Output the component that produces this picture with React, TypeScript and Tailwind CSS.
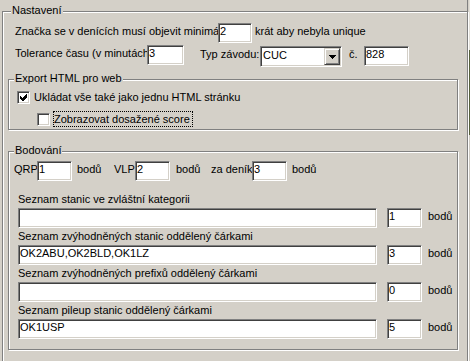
import React from 'react';

// classic etched group box, legend sits over the top line
function GroupBox({
  label,
  labelClass,
  className,
  children,
}: {
  label: string;
  labelClass: string;
  className: string;
  children: React.ReactNode;
}) {
  return (
    <div className={`relative border border-[#808080] shadow-[inset_1px_1px_0_#ffffff,1px_1px_0_#ffffff] ${className}`}>
      <span className={`absolute top-[-8px] bg-[#d4d0c8] px-px leading-[13px] whitespace-nowrap ${labelClass}`}>{label}</span>
      {children}
    </div>
  );
}

function Field({ value = '', className = '' }: { value?: string; className?: string }) {
  return (
    <div
      className={`h-[20px] shrink-0 overflow-hidden whitespace-nowrap bg-white border border-t-[#808080] border-l-[#808080] border-r-white border-b-white shadow-[inset_1px_1px_0_#404040,inset_-1px_-1px_0_#d4d0c8] pl-[1px] leading-[14px] ${className}`}
    >
      {value}
    </div>
  );
}

function Checkbox({ checked }: { checked?: boolean }) {
  return (
    <div className="w-[13px] h-[13px] shrink-0 bg-white border border-t-[#808080] border-l-[#808080] border-r-white border-b-white shadow-[inset_1px_1px_0_#404040,inset_-1px_-1px_0_#d4d0c8] flex items-center justify-center">
      {checked && (
        <svg width="9" height="9" viewBox="-1 -1 9 9" shapeRendering="crispEdges">
          <polygon points="0,2 2,4 6,0 7,0 7,3 3,7 2,7 0,5" fill="#000" />
        </svg>
      )}
    </div>
  );
}

function Select({ value }: { value: string }) {
  return (
    <div className="mt-[1px] w-[82px] h-[21px] shrink-0 flex bg-white border border-t-[#808080] border-l-[#808080] border-r-white border-b-white shadow-[inset_1px_1px_0_#404040,inset_-1px_-1px_0_#d4d0c8] p-px">
      <div className="flex-1 leading-[14px] pl-px">{value}</div>
      <div className="w-[16px] h-[17px] bg-[#d4d0c8] border border-t-[#d4d0c8] border-l-[#d4d0c8] border-r-[#404040] border-b-[#404040] shadow-[inset_1px_1px_0_#ffffff,inset_-1px_-1px_0_#808080] flex items-center justify-center">
        <svg width="7" height="4" viewBox="0 0 7 4" shapeRendering="crispEdges">
          <polygon points="0,0 7,0 3.5,4" fill="#000" />
        </svg>
      </div>
    </div>
  );
}

function ListRow({ label, value, points }: { label: string; value: string; points: string }) {
  return (
    <div>
      <div className="h-[17px] pt-px leading-[14px] whitespace-nowrap">{label}</div>
      <div className="flex items-start h-[20px]">
        <Field value={value} className="w-[359px]" />
        <Field value={points} className="w-[35px] ml-[10px]" />
        <span className="ml-[6px] mt-px leading-[14px]">bodů</span>
      </div>
    </div>
  );
}

export default function App() {
  return (
    <div className="w-[470px] h-[361px] overflow-hidden bg-[#d4d0c8] flex text-[11px] text-black font-['Liberation_Sans',Arial,sans-serif]">
      <div className="w-[469px] shrink-0">
        <div className="h-[11px] flex justify-end">
          <div className="w-px bg-[#808080] mr-px" />
        </div>

        {/* Nastavení */}
        <GroupBox label="Nastavení" labelClass="left-[8px]" className="ml-[2px] w-[466px] h-[352px]">
          <div className="flex items-start mt-[11px] pl-[12px] h-[20px]">
            <span className="w-[203px] shrink-0 overflow-hidden whitespace-nowrap mt-px leading-[14px]">
              Značka se v denících musí objevit minimá
            </span>
            <Field value="2" className="w-[34px]" />
            <span className="ml-[3px] mt-px leading-[14px] whitespace-nowrap">krát aby nebyla unique</span>
          </div>

          <div className="flex items-start mt-[2px] pl-[12px] h-[22px]">
            <span className="w-[132px] shrink-0 overflow-hidden whitespace-nowrap mt-px leading-[14px]">
              Tolerance času (v minutách
            </span>
            <Field value="3" className="w-[37px]" />
            <span className="ml-[16px] w-[60px] shrink-0 mt-[2px] leading-[14px] whitespace-nowrap">Typ závodu:</span>
            <Select value="CUC" />
            <span className="ml-[7px] w-[15px] shrink-0 mt-[2px] leading-[14px]">č.</span>
            <Field value="828" className="w-[45px] mt-px" />
          </div>

          {/* Export HTML pro web */}
          <GroupBox label="Export HTML pro web" labelClass="left-[5px]" className="mt-[12px] ml-[5px] w-[450px] h-[51px]">
            <div className="flex items-center pt-[11px] pl-[8px]">
              <Checkbox checked />
              <span className="ml-[4px] leading-[13px] whitespace-nowrap">Ukládat vše také jako jednu HTML stránku</span>
            </div>
            <div className="flex items-center mt-[7px] pl-[28px]">
              <Checkbox />
              <span className="ml-[3px] border border-dotted border-black pr-[2px] leading-[14px] whitespace-nowrap">
                Zobrazovat dosažené score
              </span>
            </div>
          </GroupBox>

          {/* Bodování */}
          <GroupBox label="Bodování" labelClass="left-[5px]" className="mt-[21px] ml-[5px] w-[450px] h-[199px]">
            <div className="flex items-start pt-[9px] pl-[5px] h-[29px]">
              <span className="w-[23px] shrink-0 overflow-hidden mt-px leading-[14px]">QRP</span>
              <Field value="1" className="w-[35px]" />
              <span className="w-[42px] shrink-0 pl-[5px] mt-px leading-[14px]">bodů</span>
              <span className="w-[21px] shrink-0 mt-px leading-[14px]">VLP</span>
              <Field value="2" className="w-[35px]" />
              <span className="w-[41px] shrink-0 pl-[6px] mt-px leading-[14px]">bodů</span>
              <span className="w-[41px] shrink-0 overflow-hidden whitespace-nowrap mt-px leading-[14px]">za deník</span>
              <Field value="3" className="w-[35px]" />
              <span className="pl-[5px] mt-px leading-[14px]">bodů</span>
            </div>

            <div className="mt-[10px] pl-[9px]">
              <ListRow label="Seznam stanic ve zvláštní kategorii" value="" points="1" />
              <ListRow label="Seznam zvýhodněných stanic oddělený čárkami" value="OK2ABU,OK2BLD,OK1LZ" points="3" />
              <ListRow label="Seznam zvýhodněných prefixů oddělený čárkami" value="" points="0" />
              <ListRow label="Seznam pileup stanic oddělený čárkami" value="OK1USP" points="5" />
            </div>
          </GroupBox>
        </GroupBox>
      </div>

      {/* sliver of whatever sits right of the window */}
      <div className="w-px flex flex-col">
        <div className="h-[50px] bg-[#e2dfd8]" />
        <div className="h-[85px] bg-[#56603c]" />
        <div className="flex-1 bg-[#cdc9c1]" />
      </div>
    </div>
  );
}
